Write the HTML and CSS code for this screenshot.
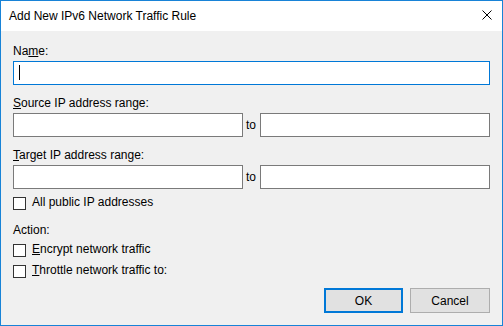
FILE: index.html
```html
<!DOCTYPE html>
<html lang="en">
<head>
    <meta charset="UTF-8">
    <title>Add New IPv6 Network Traffic Rule</title>
    <link rel="stylesheet" href="styles.css">
</head>
<body>

    <div class="window">
        <!-- Title bar -->
        <div class="titlebar">
            <span class="title">Add New IPv6 Network Traffic Rule</span>
            <span class="close-btn">
                <svg width="10" height="10" viewBox="0 0 10 10">
                    <path d="M0.5 0.5 L9.5 9.5 M9.5 0.5 L0.5 9.5" stroke="#000" stroke-width="1" fill="none"/>
                </svg>
            </span>
        </div>

        <!-- Dialog body -->
        <div class="content">
            <div class="group">
                <div class="label">Na<u>m</u>e:</div>
                <div class="field focused"><span class="caret"></span></div>
            </div>

            <div class="group">
                <div class="label"><u>S</u>ource IP address range:</div>
                <div class="range">
                    <div class="field"></div>
                    <span class="to">to</span>
                    <div class="field"></div>
                </div>
            </div>

            <div class="group">
                <div class="label"><u>T</u>arget IP address range:</div>
                <div class="range">
                    <div class="field"></div>
                    <span class="to">to</span>
                    <div class="field"></div>
                </div>
            </div>

            <div class="check first">
                <span class="box"></span>
                <span class="text">All public IP addresses</span>
            </div>

            <div class="label action">Action:</div>

            <div class="check encrypt">
                <span class="box"></span>
                <span class="text"><u>E</u>ncrypt network traffic</span>
            </div>
            <div class="check throttle">
                <span class="box"></span>
                <span class="text"><u>T</u>hrottle network traffic to:</span>
            </div>

            <div class="buttons">
                <button class="btn btn-default">OK</button>
                <button class="btn">Cancel</button>
            </div>
        </div>
    </div>

</body>
</html>
```

FILE: styles.css
```css
* {
    margin: 0;
    padding: 0;
    box-sizing: border-box;
}

body {
    font-family: 'Liberation Sans', Arial, sans-serif;
    font-size: 12px;
    color: #000;
    background: #f0f0f0;
}

/* Window frame */
.window {
    width: 503px;
    height: 326px;
    border: 1px solid #1883d7;
    background: #f0f0f0;
    display: flex;
    flex-direction: column;
}

.titlebar {
    height: 30px;
    flex-shrink: 0;
    background: #fff;
    display: flex;
    align-items: center;
    justify-content: space-between;
    padding: 0 10px 0 8px;
}

.close-btn {
    display: flex;
    margin-bottom: 2px;
}

/* Form */
.content {
    flex: 1;
    padding: 11px 12px 12px 12px;
    display: flex;
    flex-direction: column;
}

.group {
    margin-bottom: 9px;
}

.label {
    height: 18px;
    line-height: 18px;
    margin-bottom: 1px;
}

.field {
    height: 24px;
    background: #fff;
    border: 1px solid #7a7a7a;
    display: flex;
    align-items: center;
    padding-left: 5px;
}

.field.focused {
    border-color: #0078d7;
}

.caret {
    width: 1px;
    height: 15px;
    margin-top: -1px;
    background: #000;
}

.range {
    display: flex;
    align-items: center;
    gap: 3px;
}

.range .field {
    flex: 1;
}

.to {
    width: 11px;
    margin-top: -1px;
}

/* Checkboxes */
.check {
    display: flex;
    align-items: flex-start;
    height: 13px;
    gap: 6px;
}

.check .text {
    line-height: 13px;
    margin-top: -1px;
}

.check.first {
    margin-top: -1px;
    margin-bottom: 11px;
}

.check.encrypt {
    margin-top: 5px;
    margin-bottom: 8px;
}

.box {
    width: 13px;
    height: 13px;
    background: #fff;
    border: 1px solid #333;
}

.action {
    margin-bottom: 0;
}

/* Buttons */
.buttons {
    margin-top: auto;
    display: flex;
    justify-content: flex-end;
    gap: 7px;
}

.btn {
    width: 80px;
    height: 25px;
    font-family: inherit;
    font-size: 12px;
    background: #e1e1e1;
    border: 1px solid #adadad;
    color: #000;
}

.btn-default {
    width: 79px;
    border: 2px solid #0078d7;
}
```
